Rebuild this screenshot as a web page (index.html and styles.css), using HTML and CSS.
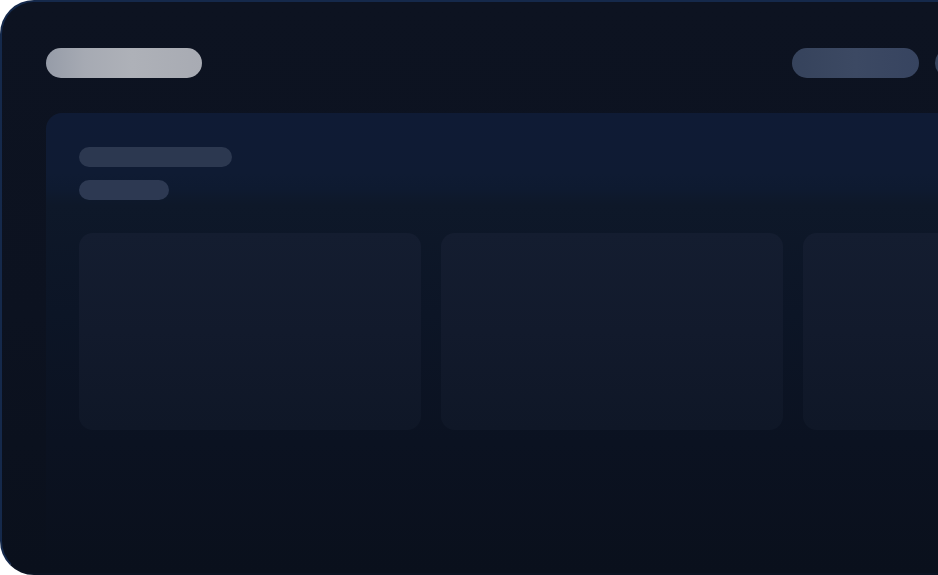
FILE: index.html
```html
<!DOCTYPE html>
<html lang="en">
<head>
<meta charset="utf-8">
<title>Loading dashboard</title>
<link rel="stylesheet" href="styles.css">
</head>
<body>
<div class="frame">
  <header class="topbar">
    <div class="pill logo"></div>
    <nav class="nav">
      <div class="pill nav-item"></div>
      <div class="pill nav-item"></div>
    </nav>
  </header>
  <main class="panel">
    <section class="hero">
      <div class="bar title"></div>
      <div class="bar subtitle"></div>
    </section>
    <section class="cards">
      <div class="card"></div>
      <div class="card"></div>
      <div class="card"></div>
    </section>
  </main>
</div>
</body>
</html>
```

FILE: styles.css
```css
html, body {
  margin: 0;
  padding: 0;
  background: #ffffff;
  overflow: hidden;
  font-family: "Inter", "Liberation Sans", sans-serif;
}

.frame {
  box-sizing: border-box;
  width: 1106px;
  height: 575px;
  border: 2px solid #15294b;
  border-right: none;
  border-bottom-color: #0b1322;
  border-radius: 34px 0 0 34px;
  background: linear-gradient(180deg, #0d1321 0%, #0c1220 55%, #0a101c 100%);
  padding: 46px 44px 0 44px;
  display: flex;
  flex-direction: column;
  overflow: hidden;
}

.topbar {
  display: flex;
  justify-content: space-between;
  align-items: center;
  height: 30px;
  flex: none;
}

.pill {
  height: 30px;
  border-radius: 15px;
}

.logo {
  width: 156px;
  background: linear-gradient(90deg, #969ca8 0%, #a6aab3 25%, #aeb1b8 55%, #a8abb3 100%);
}

.nav {
  display: flex;
  gap: 16px;
}

.nav-item {
  width: 127px;
  background: linear-gradient(90deg, #36435c 0%, #3c4963 50%, #374460 100%);
}

.panel {
  margin-top: 35px;
  flex: 1;
  border-radius: 16px 0 0 0;
  background: linear-gradient(180deg, #0f1b35 0px, #0f1b33 60px, #0e1a30 76px, #0e1829 92px, #0c1526 200px, #0b1221 330px, #0a101c 100%);
  padding: 34px 0 0 33px;
}

.hero {
  display: flex;
  flex-direction: column;
  gap: 13px;
}

.bar {
  border-radius: 10px;
}

.title {
  width: 153px;
  height: 20px;
  background: #2c3850;
}

.subtitle {
  width: 90px;
  height: 20px;
  background: #2d3952;
}

.cards {
  margin-top: 33px;
  display: flex;
  gap: 20px;
}

.card {
  flex: none;
  width: 342px;
  height: 197px;
  border-radius: 14px;
  background: linear-gradient(180deg, #141d30 0%, #121a2c 50%, #0f1727 100%);
}
```
